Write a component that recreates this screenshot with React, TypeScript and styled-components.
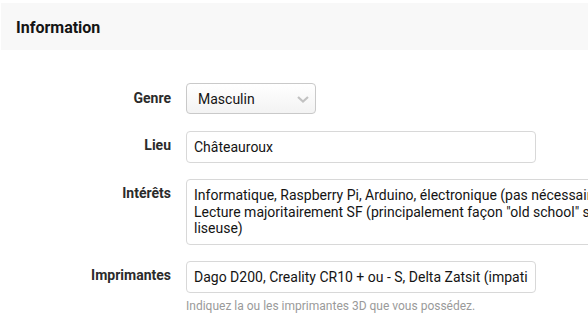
import React from "react";
import styled, { createGlobalStyle } from "styled-components";

const Global = createGlobalStyle`
  html, body { margin: 0; padding: 0; background: #fff; overflow: hidden; }
  body { font-family: Roboto, "Liberation Sans", Arial, sans-serif; color: #141414; }
  * { box-sizing: border-box; }
`;

const Page = styled.div`
  width: 588px;
  height: 318px;
  padding-top: 3px;
  padding-left: 1px;
  overflow: hidden;
`;

const Header = styled.h3`
  margin: 0;
  height: 47px;
  background: #f8f8f8;
  padding: 1px 15px 0;
  display: flex;
  align-items: center;
  font-size: 16px;
  font-weight: 700;
  color: #141414;
`;

const Form = styled.div`
  padding-top: 33px;
  display: grid;
  grid-template-columns: 170px 1fr;
  column-gap: 15px;
  row-gap: 16px;
  align-items: start;
`;

const Label = styled.label<{ $pt?: number }>`
  text-align: right;
  font-size: 14px;
  font-weight: 700;
  color: #2b2b2b;
  padding-top: ${(p) => p.$pt ?? 6}px;
  line-height: 17px;
  white-space: nowrap;
`;

const Field = styled.div`
  display: flex;
  flex-direction: column;
  min-width: 0;
`;

const SelectBox = styled.div`
  position: relative;
  width: 130px;
  height: 31px;
  border: 1px solid #c9c9c9;
  border-radius: 4px;
  background: linear-gradient(#ffffff, #f3f3f3);
  display: flex;
  align-items: center;
  padding-left: 11px;
  font-size: 14px;
  color: #141414;
  margin-bottom: 1px;
`;

const Chevron = styled.svg`
  position: absolute;
  right: 6px;
  top: 12px;
`;

const Input = styled.input`
  width: 350px;
  height: 32px;
  border: 1px solid #d8d8d8;
  border-radius: 4px;
  background: #fff;
  padding: 0 7px;
  font-family: Roboto, "Liberation Sans", Arial, sans-serif;
  font-size: 14px;
  color: #141414;
  outline: none;
`;

const TextArea = styled.textarea`
  width: 480px;
  height: 66px;
  border: 1px solid #d8d8d8;
  border-radius: 4px;
  background: #fff;
  padding: 7px 7px 4px;
  font-family: Roboto, "Liberation Sans", Arial, sans-serif;
  font-size: 14px;
  line-height: 16.5px;
  color: #141414;
  resize: none;
  overflow: hidden;
  white-space: pre;
  outline: none;
`;

const Hint = styled.div`
  margin-top: 6px;
  font-size: 12px;
  color: #9a9a9a;
  line-height: 14px;
`;

export default function App() {
  return (
    <>
      <Global />
      <Page>
        <Header>Information</Header>
        <Form>
          <Label $pt={7}>Genre</Label>
          <Field>
            <SelectBox>
              Masculin
              <Chevron width="12" height="7" viewBox="0 0 12 7">
                <path d="M1 1 L6 5.5 L11 1" fill="none" stroke="#c2c2c2" strokeWidth="2.2" />
              </Chevron>
            </SelectBox>
          </Field>

          <Label>Lieu</Label>
          <Field>
            <Input readOnly value="Châteauroux" />
          </Field>

          <Label>Intérêts</Label>
          <Field>
            <TextArea
              readOnly
              wrap="off"
              value={
                "Informatique, Raspberry Pi, Arduino, électronique (pas nécessairement dans le détail)\nLecture majoritairement SF (principalement façon \"old school\" sur\nliseuse)"
              }
            />
          </Field>

          <Label>Imprimantes</Label>
          <Field>
            <Input readOnly value="Dago D200, Creality CR10 + ou - S, Delta Zatsit (impatient)" />
            <Hint>Indiquez la ou les imprimantes 3D que vous possédez.</Hint>
          </Field>
        </Form>
      </Page>
    </>
  );
}
